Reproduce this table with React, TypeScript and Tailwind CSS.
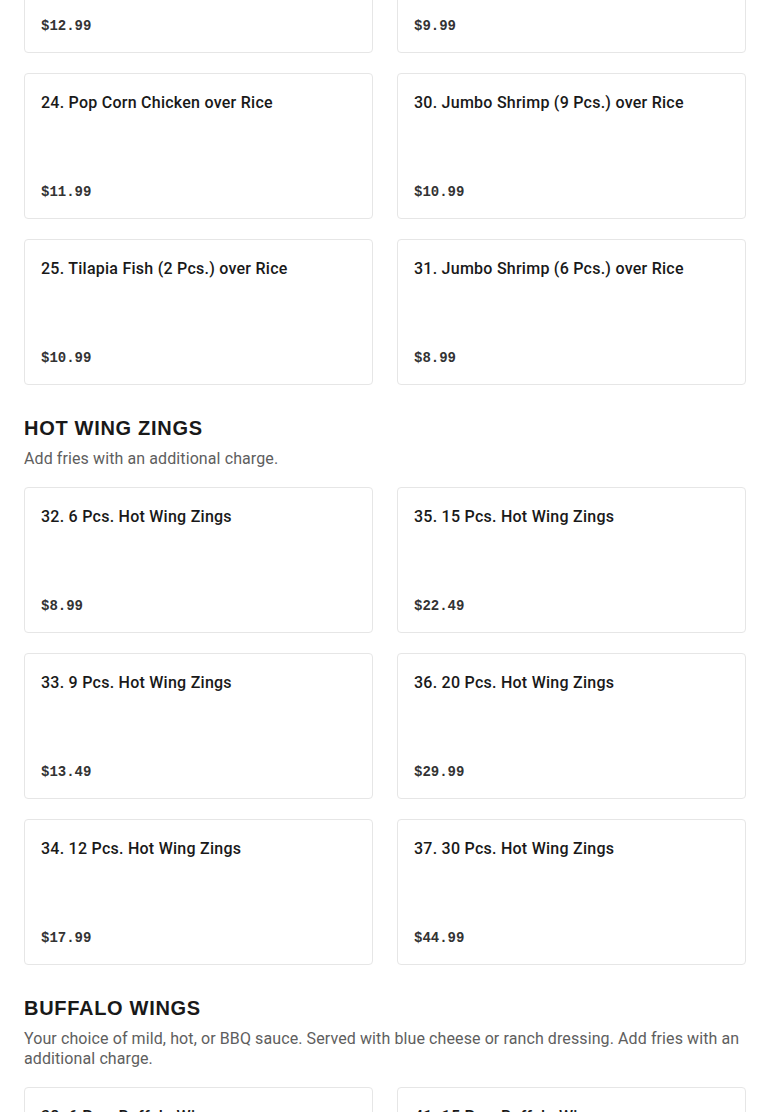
import React from "react";

type Item = { name: string; price: string };

const sections: { title?: string; desc?: string; rows: [Item, Item][] }[] = [
  {
    rows: [
      [
        { name: "23. Chicken Wings over Rice", price: "$12.99" },
        { name: "29. Jumbo Shrimp (12 Pcs.) over Rice", price: "$9.99" },
      ],
      [
        { name: "24. Pop Corn Chicken over Rice", price: "$11.99" },
        { name: "30. Jumbo Shrimp (9 Pcs.) over Rice", price: "$10.99" },
      ],
      [
        { name: "25. Tilapia Fish (2 Pcs.) over Rice", price: "$10.99" },
        { name: "31. Jumbo Shrimp (6 Pcs.) over Rice", price: "$8.99" },
      ],
    ],
  },
  {
    title: "HOT WING ZINGS",
    desc: "Add fries with an additional charge.",
    rows: [
      [
        { name: "32. 6 Pcs. Hot Wing Zings", price: "$8.99" },
        { name: "35. 15 Pcs. Hot Wing Zings", price: "$22.49" },
      ],
      [
        { name: "33. 9 Pcs. Hot Wing Zings", price: "$13.49" },
        { name: "36. 20 Pcs. Hot Wing Zings", price: "$29.99" },
      ],
      [
        { name: "34. 12 Pcs. Hot Wing Zings", price: "$17.99" },
        { name: "37. 30 Pcs. Hot Wing Zings", price: "$44.99" },
      ],
    ],
  },
  {
    title: "BUFFALO WINGS",
    desc: "Your choice of mild, hot, or BBQ sauce. Served with blue cheese or ranch dressing. Add fries with an additional charge.",
    rows: [
      [
        { name: "38. 6 Pcs. Buffalo Wings", price: "$8.99" },
        { name: "41. 15 Pcs. Buffalo Wings", price: "$22.49" },
      ],
    ],
  },
];

const Card = ({ item }: { item: Item }) => (
  <div className="h-[146px] flex flex-col justify-between border border-[#e6e6e6] rounded-[4px] bg-white px-4 pt-[17px] pb-4">
    <div className="text-[16px] leading-6 font-medium text-[#191919] font-['Roboto',sans-serif] tracking-[0.25px]">
      {item.name}
    </div>
    <div className="text-[14px] leading-5 font-bold text-[#333333] font-['Liberation_Mono',monospace]">
      {item.price}
    </div>
  </div>
);

export default function App() {
  return (
    <div className="bg-white min-h-screen overflow-hidden h-[1112px]">
      <div className="px-6 -mt-[93px]">
        {sections.map((s, i) => (
          <section key={i} className={s.title ? "mt-7" : ""}>
            {s.title && (
              <>
                <h2 className="text-[20px] leading-[30px] font-black text-[#191919] font-['Liberation_Sans',Arial,sans-serif] tracking-[0.7px]">
                  {s.title}
                </h2>
                <p className="mt-[6px] mb-[18px] text-[16px] leading-5 text-[#5e5e5e] font-['Roboto',sans-serif] tracking-[0.1px]">
                  {s.desc}
                </p>
              </>
            )}
            <div className="grid grid-cols-2 gap-x-6 gap-y-5">
              {s.rows.flat().map((it) => (
                <Card key={it.name} item={it} />
              ))}
            </div>
          </section>
        ))}
      </div>
    </div>
  );
}
